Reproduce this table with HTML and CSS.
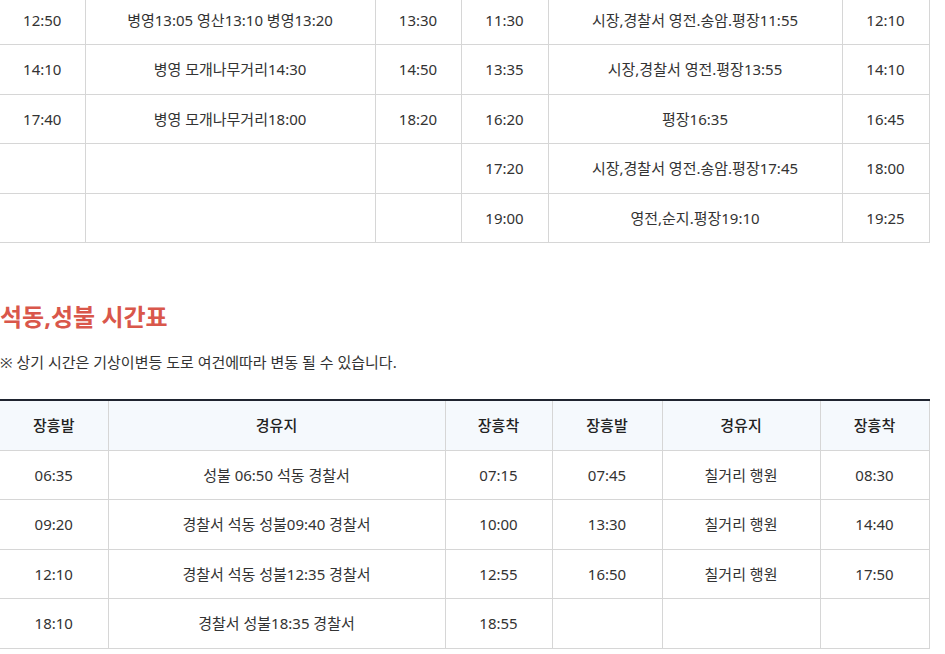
FILE: index.html
```html
<!DOCTYPE html>
<html lang="ko">
<head>
<meta charset="utf-8">
<link rel="stylesheet" href="styles.css">
</head>
<body>
<div class="page">
  <table class="tt tt-top">
    <colgroup>
      <col style="width:85px"><col style="width:290px"><col style="width:86px">
      <col style="width:87px"><col style="width:294px"><col style="width:87px">
    </colgroup>
    <tbody>
      <tr><td>12:50</td><td>병영13:05 영산13:10 병영13:20</td><td>13:30</td><td>11:30</td><td>시장,경찰서 영전.송암.평장11:55</td><td>12:10</td></tr>
      <tr><td>14:10</td><td>병영 모개나무거리14:30</td><td>14:50</td><td>13:35</td><td>시장,경찰서 영전.평장13:55</td><td>14:10</td></tr>
      <tr><td>17:40</td><td>병영 모개나무거리18:00</td><td>18:20</td><td>16:20</td><td>평장16:35</td><td>16:45</td></tr>
      <tr><td></td><td></td><td></td><td>17:20</td><td>시장,경찰서 영전.송암.평장17:45</td><td>18:00</td></tr>
      <tr><td></td><td></td><td></td><td>19:00</td><td>영전,순지.평장19:10</td><td>19:25</td></tr>
    </tbody>
  </table>

  <h2 class="title">석동,성불 시간표</h2>
  <p class="note">※ 상기 시간은 기상이변등 도로 여건에따라 변동 될 수 있습니다.</p>

  <table class="tt tt-bottom">
    <colgroup>
      <col style="width:108px"><col style="width:337px"><col style="width:107px">
      <col style="width:110px"><col style="width:158px"><col style="width:109px">
    </colgroup>
    <thead>
      <tr><th>장흥발</th><th>경유지</th><th>장흥착</th><th>장흥발</th><th>경유지</th><th>장흥착</th></tr>
    </thead>
    <tbody>
      <tr><td>06:35</td><td>성불 06:50 석동 경찰서</td><td>07:15</td><td>07:45</td><td>칠거리 행원</td><td>08:30</td></tr>
      <tr><td>09:20</td><td>경찰서 석동 성불09:40 경찰서</td><td>10:00</td><td>13:30</td><td>칠거리 행원</td><td>14:40</td></tr>
      <tr><td>12:10</td><td>경찰서 석동 성불12:35 경찰서</td><td>12:55</td><td>16:50</td><td>칠거리 행원</td><td>17:50</td></tr>
      <tr><td>18:10</td><td>경찰서 성불18:35 경찰서</td><td>18:55</td><td></td><td></td><td></td></tr>
    </tbody>
  </table>
</div>
</body>
</html>
```

FILE: styles.css
```css
html, body {
  margin: 0;
  padding: 0;
  background: #ffffff;
}
body {
  font-family: "Noto Sans", "Noto Sans CJK KR", sans-serif;
  color: #333333;
  overflow: hidden;
}
.page {
  width: 929px;
  margin-top: -4.5px;
}
.tt {
  width: 929px;
  border-collapse: collapse;
  table-layout: fixed;
  font-size: 15px;
}
.tt td,
.tt th {
  border: 1px solid #d6d6d6;
  text-align: center;
  vertical-align: middle;
  padding: 0 4px;
  height: 48.5px;
  line-height: 24px;
  color: #333333;
  font-weight: 400;
  white-space: nowrap;
}
.tt td:first-child,
.tt th:first-child {
  border-left: none;
}
.tt-top tr:first-child td {
  border-top: none;
}
.tt-bottom {
  border-top: 2px solid #1f2430;
}
.tt-bottom th {
  background: #f5f9fd;
  color: #222222;
  font-weight: 500;
  border-top: 2px solid #1f2430;
}
.title {
  margin: 57px 0 0;
  font-size: 24px;
  line-height: 34px;
  font-weight: 700;
  color: #d9574b;
}
.note {
  margin: 16px 0 25px;
  font-size: 15px;
  line-height: 24px;
  color: #333333;
}
```
